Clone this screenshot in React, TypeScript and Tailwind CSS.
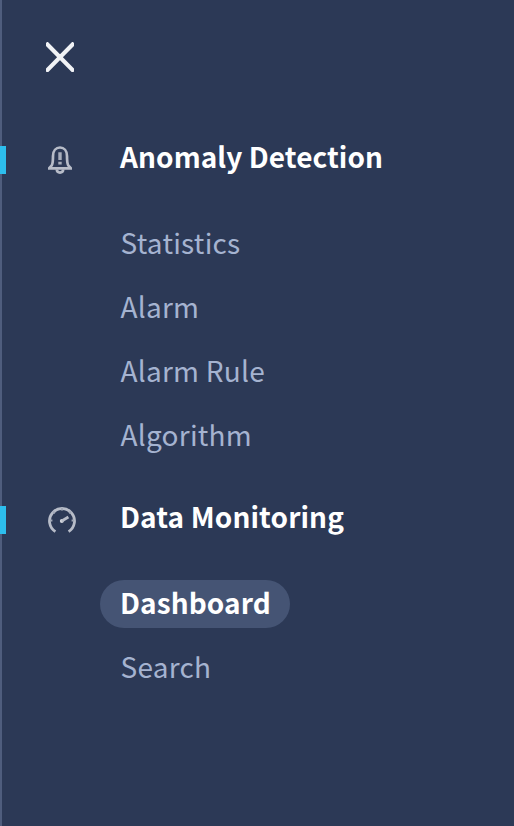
import React from "react";

function CloseIcon() {
  return (
    <svg className="block h-[30px] w-7" viewBox="0 0 28 30" fill="none" stroke="#f1f3f6" strokeWidth="4.2">
      <path d="M0 1 28 29.4M28 1 0 29.4" />
    </svg>
  );
}

function BellIcon() {
  return (
    <svg className="block h-7 w-6" viewBox="0 0 24 28" fill="none" stroke="#b7bcc8" strokeWidth="2.7">
      <path d="M1.2 22.3H22.8L20.2 19.3C19.2 17.5 19 15.5 19 10C19 4.8 16 1.5 12 1.5S5 4.8 5 10C5 15.5 4.8 17.5 3.8 19.3Z" />
      <path d="M8.8 23.5C9 27.6 15 27.6 15.2 23.5" />
      <path d="M12 6.3V14M12 15.8V18.4" stroke="#a9afbd" strokeWidth="3.4" />
    </svg>
  );
}

function GaugeIcon() {
  return (
    <svg className="block h-7 w-7" viewBox="0 0 28 28" fill="none" stroke="#b7bcc8" strokeWidth="2.8">
      <path d="M7.4 25.6A12.5 12.5 0 1 1 20.6 25.6" />
      <path d="M14 2V4.4M5.2 5.6 6.9 7.3M22.8 5.6 21.1 7.3M2 14.5H4.4M26 14.5H23.6" strokeWidth="2" stroke="#a2a9b8" />
      <circle cx="13.8" cy="15" r="2" fill="#d0d3db" stroke="none" />
      <path d="M13.8 15 20.4 11" strokeWidth="2.8" />
    </svg>
  );
}

function Section({ icon, title, spacing }: { icon: React.ReactNode; title: string; spacing: string }) {
  return (
    <div className="flex h-7 items-center">
      <span className="h-7 w-1.5 bg-[#2dbeed]" />
      <span className="ml-[42px] w-[72px]">{icon}</span>
      <h2 className={`-mt-2 text-[28px] leading-7 font-bold text-white ${spacing}`}>{title}</h2>
    </div>
  );
}

function Item({ label, active = false }: { label: string; active?: boolean }) {
  return (
    <li
      className={
        active
          ? "flex h-12 w-[190px] items-center rounded-full bg-[#455474] pb-1 pl-5 text-[28px] leading-none font-bold tracking-[0.1px] text-white"
          : "flex h-12 items-center pb-1 pl-[20.5px] text-[28px] leading-none tracking-[0.24px] text-[#a5b3d0]"
      }
    >
      <span>{label}</span>
    </li>
  );
}

export default function App() {
  return (
    <nav className="h-[826px] w-[514px] overflow-hidden bg-[linear-gradient(to_right,#4f5d7d_2px,#2c3956_2px)] font-['Noto_Sans_CJK_SC',sans-serif] whitespace-nowrap">
      <button className="mt-[42px] ml-[46px] block" aria-label="Close">
        <CloseIcon />
      </button>
      <div className="mt-[74px]">
        <Section icon={<BellIcon />} title="Anomaly Detection" spacing="tracking-[0.07px]" />
        <ul className="mt-[46px] ml-[100px] flex flex-col gap-4">
          <Item label="Statistics" />
          <Item label="Alarm" />
          <Item label="Alarm Rule" />
          <Item label="Algorithm" />
        </ul>
      </div>
      <div className="mt-[46px]">
        <Section icon={<GaugeIcon />} title="Data Monitoring" spacing="tracking-[0.13px]" />
        <ul className="mt-[46px] ml-[100px] flex flex-col gap-4">
          <Item label="Dashboard" active />
          <Item label="Search" />
        </ul>
      </div>
    </nav>
  );
}
